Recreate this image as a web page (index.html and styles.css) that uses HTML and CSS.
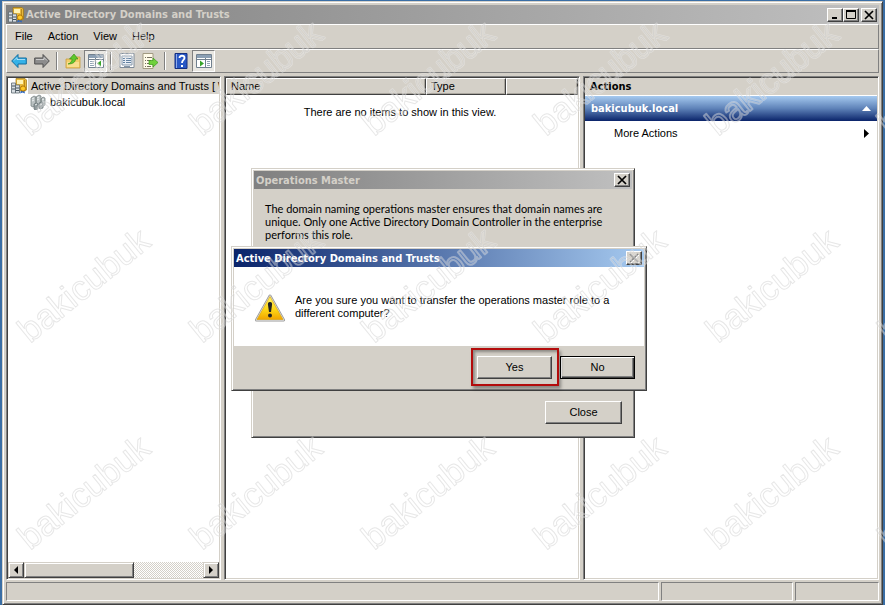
FILE: index.html
```html
<!DOCTYPE html>
<html lang="en">
<head>
<meta charset="utf-8">
<title>Active Directory Domains and Trusts</title>
<link rel="stylesheet" href="styles.css">
</head>
<body>
<svg class="symbols" aria-hidden="true">
  <symbol id="servers" viewBox="0 0 16 16">
    <path d="M5 .5h9l1.500 1.500v10L14 13H5z" fill="#e8b93c" stroke="#9b7414" stroke-width=".7"/>
    <path d="M6 2h6v4H6z" fill="#fff3b4"/><path d="M13.500 2v10" stroke="#b98a1c"/>
    <path d="M.5 5h4v10h-4zM4.500 7h4v8h-4z" fill="#d7dde2" stroke="#5c6870" stroke-width=".8"/>
    <path d="M1 8h3M1 11h3M5 10h3M5 12.500h3" stroke="#44525c"/>
    <path d="M10.500 11.500l-1.500 4 2.500-1 2.500 1-1-4z" fill="#2b67c4"/>
    <circle cx="12" cy="10.500" r="2.600" fill="#ffca28" stroke="#b27606"/>
  </symbol>
  <symbol id="domain" viewBox="0 0 16 16">
    <path d="M1 4l3-2 2 1v8l-3 2-2-1zM6 3l3-2 2 1v9l-3 2-2-1zM11 5l2-2 2 1v7l-3 2-1-1z" fill="#b9c0c1" stroke="#6e787a" stroke-width=".7"/>
    <path d="M4 10l3-1 1 1v5l-3 1-1-1zM9 9l3-1 1 1v5l-3 1-1-1z" fill="#8f999b" stroke="#697477" stroke-width=".7"/>
    <path d="M2 5l2-1M2 7l2-1M7 4l2-1M7 6l2-1M12 6l2-1M5 11l2-1M10 11l2-1" stroke="#eef1f1"/>
  </symbol>
  <symbol id="arrow" viewBox="0 0 16 16">
    <path d="M.7 8L7 1.500V5h8.300v6H7v3.500z" stroke-width="1"/>
    <path d="M3 7.500L6 4.500v2h8" fill="none" stroke="#fff" stroke-opacity=".55"/>
  </symbol>
</svg>
<main class="window">
  <header class="titlebar">
    <svg class="icon"><use href="#servers"/></svg>
    <h1>Active Directory Domains and Trusts</h1>
    <div class="controls">
      <button class="control" aria-label="Minimize"><svg viewBox="0 0 12 10"><path d="M3 8h5" stroke="#000" stroke-width="2"/></svg></button>
      <button class="control" aria-label="Maximize"><svg viewBox="0 0 12 10"><path d="M1.500 1.500h9v7h-9z" fill="none" stroke="#000"/><path d="M1 1h10" stroke="#000" stroke-width="2"/></svg></button>
      <button class="control close" aria-label="Close"><svg viewBox="0 0 12 10"><path d="M2 1l8 8M10 1L2 9" stroke="#000" stroke-width="1.700"/></svg></button>
    </div>
  </header>
  <nav class="menubar">
    <button>File</button><button>Action</button><button>View</button><button>Help</button>
  </nav>
  <div class="toolbar">
    <button aria-label="Back"><svg class="icon" fill="#35b2e8" stroke="#126c9f"><use href="#arrow"/></svg></button>
    <button aria-label="Forward"><svg class="icon flip" fill="#8c8c8c" stroke="#505050"><use href="#arrow"/></svg></button>
    <i class="sep"></i>
    <button aria-label="Up one level"><svg class="icon" viewBox="0 0 16 16"><path d="M1 6h5l1.500-2H15v11H1z" fill="#f2ce69" stroke="#c69c3c" stroke-width=".8"/><path d="M2 9h12v5H2z" fill="#f9de8d"/><path d="M3 11c3-1 4-3 4-5H4.500L9 1l4 5h-2.500c0 3-2.500 5-7.500 5z" fill="#5fc72d" stroke="#30860f" stroke-width=".6"/></svg></button>
    <button class="pressed" aria-label="Show or hide console tree"><svg class="icon" viewBox="0 0 16 16"><path d="M.5 1.500h15v13H.5z" fill="#fff" stroke="#71808f"/><path d="M1 2h14v3H1z" fill="#8b9fb4"/><path d="M1 6.500h14M7.500 5v9" stroke="#71808f"/><path d="M2 8.500h4M2 10.500h4M2 12.500h4" stroke="#91a2b2"/><path d="M13 7.500v6L9 10.500z" fill="#39a42a"/></svg></button>
    <i class="sep"></i>
    <button aria-label="Properties"><svg class="icon" viewBox="0 0 16 16"><path d="M1 .5h14v14H1z" fill="#fff" stroke="#7f8b98"/><path d="M3 3h10v9H3z" fill="#e8eef5" stroke="#8395a7"/><path d="M4 5.500h2M7 5.500h5M4 7.500h2M7 7.500h5M4 9.500h2M7 9.500h5" stroke="#6281a1"/><path d="M5 13.500h6" stroke="#8395a7"/></svg></button>
    <button aria-label="Export list"><svg class="icon" viewBox="0 0 16 16"><path d="M1 .5h10v15H1z" fill="#fffbe8" stroke="#a29b82"/><path d="M3 4.500h1M5 4.500h5M3 7.500h1M5 7.500h4M3 10.500h1M5 10.500h4M3 13.500h1M5 13.500h4" stroke="#75705f"/><path d="M7 7.500h4V5l5 4.500-5 4.500v-2.500H7z" fill="#70d13d" stroke="#3b9b1b" stroke-width=".7"/></svg></button>
    <i class="sep"></i>
    <button aria-label="Help"><svg class="icon" viewBox="0 0 16 16"><path d="M2 .5h12v15H2z" fill="#2857c5" stroke="#142f80"/><path d="M3.500 1v14" stroke="#8faae8"/><path d="M6.500 5c0-3 5-3 5 0 0 2-2.500 2-2.500 5" fill="none" stroke="#fff" stroke-width="1.800"/><path d="M8 12h2v2H8z" fill="#fff"/></svg></button>
    <button class="pressed" aria-label="Show or hide action pane"><svg class="icon" viewBox="0 0 16 16"><path d="M.5 1.500h15v13H.5z" fill="#fff" stroke="#71808f"/><path d="M1 2h14v3H1z" fill="#8b9fb4"/><path d="M1 6.500h14M9.500 5v9" stroke="#71808f"/><path d="M11 8.500h3M11 10.500h3M11 12.500h3" stroke="#91a2b2"/><path d="M4 7.500v6l4-3z" fill="#39a42a"/></svg></button>
  </div>
  <div class="panes">
    <section class="pane tree">
      <ul>
        <li class="root"><svg class="icon"><use href="#servers"/></svg><span>Active Directory Domains and Trusts [ \</span></li>
        <li class="child"><svg class="icon"><use href="#domain"/></svg><span>bakicubuk.local</span></li>
      </ul>
      <div class="scrollbar">
        <button aria-label="Scroll left"><svg viewBox="0 0 4 8"><path d="M4 0v8L0 4z"/></svg></button>
        <div class="thumb"></div>
        <button class="end" aria-label="Scroll right"><svg viewBox="0 0 4 8"><path d="M0 0v8l4-4z"/></svg></button>
      </div>
    </section>
    <section class="pane">
      <table>
        <colgroup><col class="col-name"><col class="col-type"><col></colgroup>
        <thead><tr><th>Name</th><th>Type</th><th></th></tr></thead>
        <tbody><tr><td colspan="3">There are no items to show in this view.</td></tr></tbody>
      </table>
    </section>
    <aside class="pane">
      <h2>Actions</h2>
      <h3><span>bakicubuk.local</span><svg viewBox="0 0 9 5" width="9" height="5"><path d="M0 5h9L4.500 0z" fill="#fff"/></svg></h3>
      <button class="more"><span>More Actions</span><svg viewBox="0 0 5 9" width="5" height="9"><path d="M0 0v9l5-4.500z"/></svg></button>
    </aside>
  </div>
  <footer class="status"><div></div><div></div><div></div></footer>
</main>

<section class="dialog master" role="dialog" aria-labelledby="master-title">
  <header class="titlebar">
    <h2 id="master-title">Operations Master</h2>
    <button class="control" aria-label="Close"><svg viewBox="0 0 12 10"><path d="M2 1l8 8M10 1L2 9" stroke="#000" stroke-width="1.700"/></svg></button>
  </header>
  <p>The domain naming operations master ensures that domain names are<br>unique. Only one Active Directory Domain Controller in the enterprise<br>performs this role.</p>
  <div class="actions"><button class="push">Close</button></div>
</section>

<section class="dialog confirm" role="alertdialog" aria-labelledby="confirm-title">
  <header class="titlebar active">
    <h2 id="confirm-title">Active Directory Domains and Trusts</h2>
    <button class="control" aria-label="Close" disabled><svg viewBox="0 0 12 10"><path d="M3 2l8 8M11 2L3 10" stroke="#fff" stroke-width="1"/><path d="M2 1l8 8M10 1L2 9" stroke="#808080" stroke-width="1.500"/></svg></button>
  </header>
  <div class="message">
    <svg class="warning" viewBox="0 0 32 30">
      <defs><linearGradient id="amber" x2="0" y2="1"><stop offset="0" stop-color="#fff36a"/><stop offset=".6" stop-color="#fdd414"/><stop offset="1" stop-color="#f0a400"/></linearGradient></defs>
      <path d="M16 2L29.500 26h-27z" fill="#999" stroke="#999" stroke-width="3" stroke-linejoin="round"/>
      <path d="M16 2L29.500 26h-27z" fill="#ddd" stroke="#ddd" stroke-width="1.500" stroke-linejoin="round"/>
      <path d="M16 2.500L29 25.500H3z" fill="url(#amber)" stroke="#d9a000" stroke-width=".6" stroke-linejoin="round"/>
      <path d="M16 8c-2 0-2.300 1.500-2 3l1 7h2l1-7c.3-1.500 0-3-2-3z" fill="#222"/><circle cx="16" cy="21.500" r="2" fill="#222"/>
    </svg>
    <p>Are you sure you want to transfer the operations master role to a<br>different computer?</p>
  </div>
  <div class="actions"><button class="push yes">Yes</button><button class="push default">No</button></div>
</section>

<svg class="watermark" aria-hidden="true">
  <defs><pattern id="mark" width="172" height="207" patternUnits="userSpaceOnUse">
    <g transform="translate(30 137) rotate(-39)"><text class="halo">bakicubuk</text><text class="line">bakicubuk</text></g>
  </pattern></defs>
  <rect width="100%" height="100%" fill="url(#mark)"/>
</svg>
</body>
</html>
```
FILE: styles.css
```css
* { box-sizing: border-box; }

:root {
  --face: #d4d0c8;
  --shadow: #808080;
  --dark: #404040;
}

body {
  position: relative;
  display: flex;
  height: 100vh;
  margin: 0;
  padding: 1px 2px 0;
  overflow: hidden;
  background: #3a6ea5;
  color: #000;
  font: 11px/13px "Liberation Sans", sans-serif;
}

h1, h2, h3, p, ul { margin: 0; padding: 0; font-size: 11px; }
h1, h2, h3 { font-family: "DejaVu Sans Condensed", "DejaVu Sans", sans-serif; }
button { margin: 0; padding: 0; border: 0; background: none; color: inherit; font: inherit; }
svg { display: block; flex: none; }
.symbols { position: absolute; width: 0; height: 0; }
.icon { width: 16px; height: 16px; }
.flip { transform: scaleX(-1); }

.window, .dialog {
  display: flex;
  flex-direction: column;
  border: 1px solid;
  border-color: var(--face) var(--dark) var(--dark) var(--face);
  background: var(--face);
  box-shadow: inset 1px 1px #fff, inset -1px -1px var(--shadow);
}
.window { flex: 1; padding: 3px; }

.titlebar {
  display: flex;
  align-items: center;
  height: 18px;
  padding: 0 2px;
  background: linear-gradient(90deg, #808080, #c0c0c0);
  color: var(--face);
}
.titlebar.active { background: linear-gradient(90deg, #0a246a, #a6caf0); color: #fff; }
.titlebar h1, .titlebar h2 { flex: 1; }
.window > .titlebar { height: 19px; gap: 2px; }
.controls { display: flex; }
.control {
  display: grid;
  place-items: center;
  width: 16px;
  height: 14px;
  border: 1px solid;
  border-color: #fff var(--dark) var(--dark) #fff;
  background: var(--face);
  box-shadow: inset -1px -1px var(--shadow);
}
.control svg { width: 12px; height: 10px; }
.control.close { margin-left: 2px; }

.menubar, .toolbar {
  display: flex;
  align-items: center;
  border: 1px solid;
  border-color: #fff var(--shadow) var(--shadow) #fff;
}
.menubar { height: 25px; gap: 15px; padding: 0 8px; }
.toolbar { height: 24px; }
.toolbar button { display: grid; place-items: center; width: 23px; height: 22px; }
.toolbar .pressed {
  border: 1px solid;
  border-color: var(--shadow) #fff #fff var(--shadow);
  background: #e9e7e2;
}
.sep { width: 2px; height: 18px; margin: 0 3px; border-left: 1px solid var(--shadow); border-right: 1px solid #fff; }

.panes {
  display: grid;
  flex: 1;
  grid-template-columns: 215px 1fr 296px;
  gap: 3px;
  min-height: 0;
  margin: 3px 0 2px;
}
.pane {
  min-width: 0;
  border: 1px solid;
  border-color: var(--shadow) #fff #fff var(--shadow);
  padding: 1px;
  background: #fff;
  box-shadow: inset 1px 1px var(--dark), inset -1px -1px var(--face);
}

.tree { display: flex; flex-direction: column; }
.tree ul { flex: 1; list-style: none; }
.tree li { display: flex; align-items: center; height: 16px; gap: 4px; overflow: hidden; white-space: nowrap; }
.root { padding-left: 3px; background: linear-gradient(90deg, #fff 20px, var(--face) 20px); }
.child { padding-left: 22px; }

.scrollbar {
  display: flex;
  height: 16px;
  background: repeating-conic-gradient(#fff 0 25%, var(--face) 0 50%) 0 0 / 2px 2px;
}
.scrollbar button, .thumb {
  border: 1px solid;
  border-color: var(--face) var(--dark) var(--dark) var(--face);
  background: var(--face);
  box-shadow: inset 1px 1px #fff, inset -1px -1px var(--shadow);
}
.scrollbar button { display: grid; place-items: center; width: 16px; }
.scrollbar svg { width: 4px; height: 8px; }
.thumb { width: 52%; }
.scrollbar .end { margin-left: auto; }

table { width: 100%; border-collapse: separate; border-spacing: 0; table-layout: fixed; }
.col-name { width: 200px; }
.col-type { width: 80px; }
th {
  height: 17px;
  padding: 0 4px;
  border: 1px solid;
  border-color: #fff var(--dark) var(--dark) #fff;
  background: var(--face);
  box-shadow: inset -1px -1px #aaa69e;
  font-weight: 400;
  text-align: left;
}
td { padding: 11px 4px 0 0; text-align: center; }

aside h2 { height: 17px; padding: 2px 5px; background: var(--face); }
aside h3 {
  display: flex;
  align-items: center;
  justify-content: space-between;
  height: 26px;
  padding: 0 6px;
  border-top: 1px solid #fff;
  background: linear-gradient(#a6caf0, #5e82b8 50%, #0a246a);
  color: #fff;
}
.more {
  display: flex;
  align-items: center;
  justify-content: space-between;
  width: 100%;
  height: 24px;
  padding: 0 8px 0 29px;
}

.status { display: grid; grid-template-columns: 1fr 132px 84px; gap: 2px; height: 19px; }
.status div { border: 1px solid; border-color: var(--shadow) #fff #fff var(--shadow); }

.dialog { position: absolute; padding: 2px; }
.master { top: 168px; left: 251px; width: 384px; height: 270px; }
.confirm { top: 246px; left: 231px; width: 416px; height: 145px; }
.master p { flex: 1; padding: 13px 11px; font-family: Lato, sans-serif; }
.actions { display: flex; justify-content: flex-end; gap: 8px; padding: 10px 9px 9px; }
.master .actions { padding: 10px 10px 11px; }
.message { display: flex; flex: 1; gap: 9px; padding: 27px 20px 0; background: #fff; }
.message p { white-space: nowrap; }
.warning { width: 32px; height: 30px; }

.push {
  width: 75px;
  height: 23px;
  border: 1px solid;
  border-color: #fff var(--dark) var(--dark) #fff;
  background: var(--face);
  box-shadow: inset -1px -1px var(--shadow);
}
.master .push { width: 77px; }
.yes { position: relative; }
.yes::after {
  content: "";
  position: absolute;
  inset: -9px -8px -8px -7px;
  border: 2px solid #b30c0c;
  box-shadow: 2px 3px 3px rgb(0 0 0 / 35%), inset 2px 2px 3px rgb(0 0 0 / 35%);
}
.push.default { border-color: #000; box-shadow: inset 1px 1px #fff, inset -1px -1px var(--dark), inset -2px -2px var(--shadow); }

.watermark { position: absolute; inset: 0; width: 100%; height: 100%; pointer-events: none; }
.watermark text { font: 35px "Liberation Sans", sans-serif; fill: none; stroke-linejoin: round; }
.halo { stroke: #fff; stroke-width: 2px; stroke-opacity: .35; }
.line { stroke: #b0b0b0; stroke-width: 1px; stroke-opacity: .3; }
```
